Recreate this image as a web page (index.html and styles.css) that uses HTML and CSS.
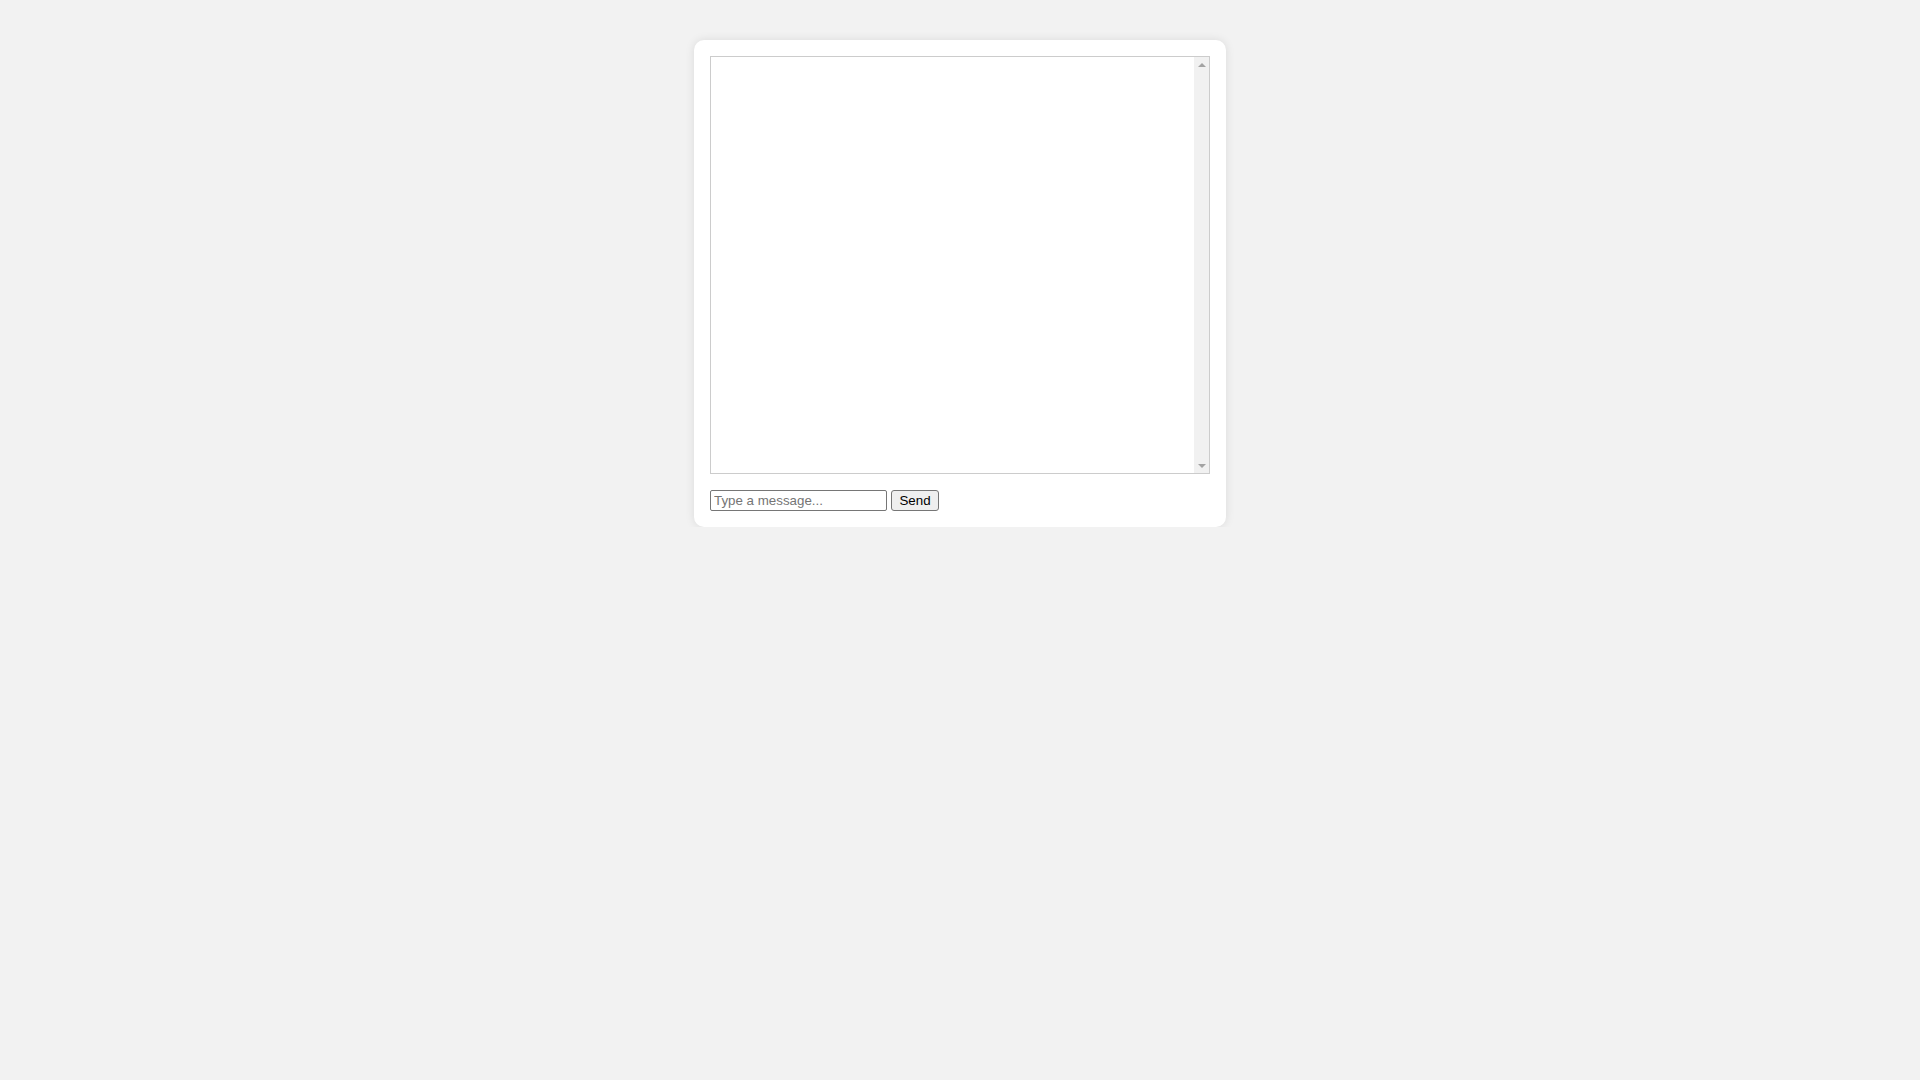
FILE: index.html
```html
<!DOCTYPE html>
<html>
<head>
<meta charset="utf-8">
<link rel="stylesheet" href="styles.css">
</head>
<body>
<div class="chat-container">
  <div class="chat-box">
    <div class="messages"></div>
    <div class="scrollbar">
      <span class="arrow arrow-up"></span>
      <span class="arrow arrow-down"></span>
    </div>
  </div>
  <div class="input-row">
    <input type="text" class="msg-input" placeholder="Type a message...">
    <button class="send-btn">Send</button>
  </div>
</div>
</body>
</html>
```
FILE: styles.css
```css
html, body {
  margin: 0;
  padding: 0;
}
body {
  background: #f2f2f2;
  font-family: "Liberation Sans", Arial, sans-serif;
  padding-top: 40px;
}
.chat-container {
  width: 500px;
  margin: 0 auto;
  padding: 16px;
  background: #fff;
  border-radius: 10px;
  box-shadow: 0 0 10px rgba(0, 0, 0, 0.1);
}
.chat-box {
  box-sizing: border-box;
  height: 418px;
  border: 1px solid #ccc;
  display: flex;
}
.messages {
  flex: 1;
}
.scrollbar {
  width: 15px;
  background: #f1f1f1;
  display: flex;
  flex-direction: column;
  justify-content: space-between;
  align-items: center;
  padding: 6px 0 5px;
}
.arrow {
  width: 0;
  height: 0;
  border-left: 4px solid transparent;
  border-right: 4px solid transparent;
}
.arrow-up {
  border-bottom: 4px solid #a3a3a3;
}
.arrow-down {
  border-top: 4px solid #a3a3a3;
}
.input-row {
  margin-top: 16px;
  display: flex;
  gap: 4px;
}
.msg-input {
  box-sizing: border-box;
  width: 177px;
  height: 21px;
  margin: 0;
  padding: 1px 3px;
  border: 1px solid #767676;
  border-radius: 2px;
  font-family: "Liberation Sans", Arial, sans-serif;
  font-size: 13.333px;
  color: #000;
}
.msg-input::placeholder {
  color: #757575;
}
.send-btn {
  box-sizing: border-box;
  width: 48px;
  height: 21px;
  margin: 0;
  padding: 1px 6px;
  border: 1px solid #767676;
  border-radius: 3px;
  background: #efefef;
  font-family: "Liberation Sans", Arial, sans-serif;
  font-size: 13.333px;
  font-weight: 400;
  color: #000;
}
```
